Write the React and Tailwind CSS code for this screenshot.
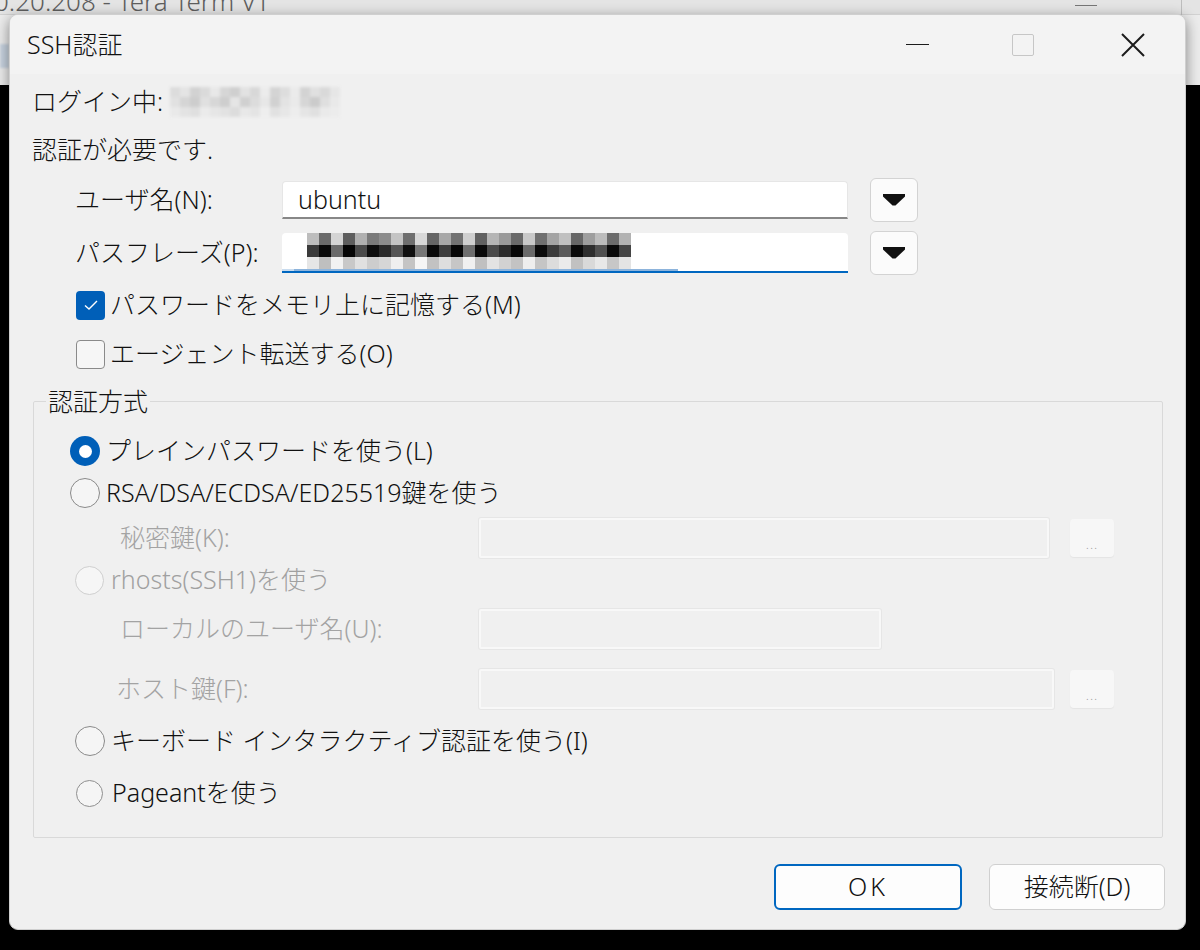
import React from "react";

const FONT = "font-['Noto_Sans','Noto_Sans_CJK_JP',sans-serif]";

// Pixelated mask used over the hidden passphrase
const MID = ["#3a3a3a","#0a0a0a","#6a6a6a","#050505","#4a4a4a","#0d0d0d","#2a2a2a","#555555","#101010","#777777","#0a0a0a","#3d3d3d","#060606","#6e6e6e","#0a0a0a","#4a4a4a","#2c2c2c","#080808","#6a6a6a","#0b0b0b","#3b3b3b","#5a5a5a","#0a0a0a","#2e2e2e","#505050","#0a0a0a","#444444"];
const TOP = ["#bdbdbd","#6b6b6b","#d4d4d4","#5e5e5e","#b0b0b0","#7a7a7a","#8c8c8c","#c4c4c4","#6f6f6f","#d8d8d8","#666666","#a8a8a8","#727272","#cfcfcf","#616161","#b5b5b5","#9a9a9a","#6a6a6a","#c9c9c9","#707070","#a4a4a4","#c0c0c0","#676767","#9e9e9e","#bcbcbc","#6c6c6c","#b2b2b2"];
const BOT = ["#e6e6e6","#bfbfbf","#f2f2f2","#c8c8c8","#e0e0e0","#cdcdcd","#d6d6d6","#efefef","#c4c4c4","#f5f5f5","#c2c2c2","#dedede","#c6c6c6","#f0f0f0","#c0c0c0","#e3e3e3","#d2d2d2","#c3c3c3","#eeeeee","#c5c5c5","#dcdcdc","#ebebeb","#c1c1c1","#d9d9d9","#e8e8e8","#c7c7c7","#e4e4e4"];

function PassMask() {
  return (
    <svg className="absolute left-0 top-0" width="566" height="42" viewBox="0 0 566 42">
      {MID.map((c, i) => (
        <g key={i}>
          <rect x={25 + i * 12} y="0" width="12" height="12" fill={TOP[i]} />
          <rect x={25 + i * 12} y="12" width="12" height="12" fill={c} />
          <rect x={25 + i * 12} y="24" width="12" height="12" fill={BOT[i]} />
        </g>
      ))}
      <rect x="0" y="36" width="12" height="5" fill="#c9dcef" />
      <rect x="12" y="36" width="384" height="5" fill="#8db4dc" />
    </svg>
  );
}

// Blurred host name after "ログイン中:"
const HOST = [
  ["#dcdcdc","#e4e4e4","#d2d2d2","#dadada","#e8e8e8","#d6d6d6","#cfcfcf","#e2e2e2","#d8d8d8","#ececec","#d4d4d4","#dddddd","#ebebeb","#d3d3d3","#e0e0e0","#d9d9d9","#e6e6e6"],
  ["#e1e1e1","#d5d5d5","#cdcdcd","#e0e0e0","#d7d7d7","#cecece","#e5e5e5","#d0d0d0","#dcdcdc","#e7e7e7","#d1d1d1","#e3e3e3","#eaeaea","#d6d6d6","#cbcbcb","#dfdfdf","#e9e9e9"],
  ["#e9e9e9","#e3e3e3","#dfdfdf","#ebebeb","#e6e6e6","#e2e2e2","#dcdcdc","#e8e8e8","#e4e4e4","#eeeeee","#e1e1e1","#e7e7e7","#ededed","#e5e5e5","#e0e0e0","#eaeaea","#ececec"],
];

function HostBlur() {
  return (
    <svg className="blur-[1.5px]" width="171" height="30" viewBox="0 0 171 30">
      {HOST.map((row, r) =>
        row.map((c, i) => <rect key={`${r}-${i}`} x={i * 10} y={r * 10} width="10" height="10" fill={c} />)
      )}
    </svg>
  );
}

function DropButton() {
  return (
    <div className="ml-[22px] flex h-[44px] w-[48px] items-center justify-center rounded-[6px] border border-[#d3d3d3] bg-[#fbfbfb]">
      <svg width="22" height="12" viewBox="0 0 22 12">
        <polygon points="0,0 22,0 22,2.5 12.5,11.5 9.5,11.5 0,2.5" fill="#111" />
      </svg>
    </div>
  );
}

function Check({ on }) {
  return on ? (
    <div className="flex h-[29px] w-[29px] items-center justify-center rounded-[4px] bg-[#005fb8]">
      <svg width="16" height="12" viewBox="0 0 16 12">
        <path d="M2 6.5 L6 10 L14 2" fill="none" stroke="#fff" strokeWidth="1.4" />
      </svg>
    </div>
  ) : (
    <div className="h-[29px] w-[29px] rounded-[4px] border-[1.5px] border-[#8a8a8a] bg-[#f6f6f6]" />
  );
}

function Radio({ kind }) {
  if (kind === "on")
    return (
      <div className="flex h-[30px] w-[30px] items-center justify-center rounded-full bg-[#005fb8]">
        <div className="h-[13px] w-[13px] rounded-full bg-white" />
      </div>
    );
  if (kind === "off-dim")
    return <div className="h-[29px] w-[29px] rounded-full border-[1.5px] border-[#cfcfcf] bg-[#f6f6f6]" />;
  if (kind === "small")
    return <div className="h-[27px] w-[27px] rounded-full border-[1.5px] border-[#8f8f8f] bg-[#f5f5f5]" />;
  return <div className="h-[30px] w-[30px] rounded-full border-[1.5px] border-[#8a8a8a] bg-[#f5f5f5]" />;
}

function DimField({ w }) {
  return <div className={`h-[40px] ${w} rounded-[2px] border-2 border-[#f8f8f8] bg-[#f0f0f0] shadow-[0_0_0_1px_#e6e6e6]`} />;
}

function DotsButton({ gap }) {
  return (
    <div className={`${gap} flex h-[38px] w-[44px] items-end justify-center rounded-[4px] bg-[#f7f7f7] pb-[6px] text-[13px] leading-none tracking-[1px] text-[#9a9a9a] shadow-[0_1px_1px_#e4e4e4]`}>
      ...
    </div>
  );
}

export default function App() {
  return (
    <div className={`relative h-[950px] w-[1200px] overflow-hidden bg-black ${FONT} font-light`}>
      {/* parent terminal window peeking out behind the dialog */}
      <div className="relative h-[85px] w-full bg-[#ececec]">
        <div className="flex h-[15px] items-end overflow-hidden border-b border-[#d2d2d2] bg-[#e4e4e4]">
          <span className="ml-[-6px] whitespace-nowrap text-[26px] leading-[26px] text-[#5e5e5e]">0.20.208 - Tera Term VT</span>
        </div>
        <div className="absolute left-[1075px] top-[5px] h-[1px] w-[22px] bg-[#777]" />
        <div className="absolute left-[1181px] top-0 h-[15px] w-[1px] bg-[#bdbdbd]" />
        <div className="absolute left-0 top-[44px] h-[24px] w-[9px] bg-[#c8d3e0] blur-[1px]" />
      </div>

      {/* SSH authentication dialog */}
      <div className="absolute left-[9px] top-[14px] flex h-[916px] w-[1177px] flex-col overflow-hidden rounded-[9px] border border-[#cfcfcf] bg-[#f0f0f0] text-[25px] text-[#111] shadow-[0_4px_14px_rgba(0,0,0,0.45)]">
        {/* title bar */}
        <div className="flex h-[59px] shrink-0 items-center bg-[#f3f3f3]">
          <div className="ml-[17px] text-[25px] leading-none">SSH認証</div>
          <div className="ml-auto flex items-center">
            <div className="h-[1.5px] w-[23px] bg-[#1b1b1b]" />
            <div className="ml-[83px] h-[22px] w-[22px] rounded-[2px] border-[1.5px] border-[#c6c6c6]" />
            <svg className="ml-[87px] mr-[40px]" width="24" height="24" viewBox="0 0 24 24">
              <path d="M1 1 L23 23 M23 1 L1 23" stroke="#1b1b1b" strokeWidth="2" />
            </svg>
          </div>
        </div>

        {/* header text */}
        <div className="mt-[4px] flex h-[48px] items-center pl-[22px]">
          <span>ログイン中:</span>
          <span className="ml-[7px]"><HostBlur /></span>
        </div>
        <div className="flex h-[48px] items-center pl-[22px]">認証が必要です.</div>

        {/* user name */}
        <div className="flex h-[52px] items-center pl-[65px]">
          <div className="w-[207px]">ユーザ名(N):</div>
          <div className="flex h-[38px] w-[566px] items-center rounded-t-[4px] border border-b-2 border-[#e6e6e6] border-b-[#878787] bg-white pl-[15px]">
            ubuntu
          </div>
          <DropButton />
        </div>

        {/* passphrase */}
        <div className="flex h-[54px] items-center pl-[65px]">
          <div className="w-[207px]">パスフレーズ(P):</div>
          <div className="relative h-[40px] w-[566px] overflow-hidden rounded-t-[4px] border-b-2 border-[#0067c0] bg-white">
            <PassMask />
          </div>
          <DropButton />
        </div>

        {/* options */}
        <div className="flex h-[50px] items-center gap-[5px] pl-[66px]">
          <Check on />
          <span>パスワードをメモリ上に記憶する(M)</span>
        </div>
        <div className="flex h-[48px] items-center gap-[5px] pl-[66px]">
          <Check />
          <span>エージェント転送する(O)</span>
        </div>

        {/* authentication method group */}
        <fieldset className="ml-[23px] mt-[9px] w-[1130px] rounded-[2px] border border-[#d9d9d9] pb-[15px]">
          <legend className="ml-[12px] px-[2px] leading-[28px]">認証方式</legend>

          <div className="mt-[15px] flex h-[42px] items-center gap-[6px] pl-[36px]">
            <Radio kind="on" />
            <span>プレインパスワードを使う(L)</span>
          </div>
          <div className="flex h-[42px] items-center gap-[6px] pl-[36px]">
            <Radio />
            <span>RSA/DSA/ECDSA/ED25519鍵を使う</span>
          </div>
          <div className="flex h-[48px] items-center pl-[86px] text-[#a3a3a3]">
            <div className="w-[359px]">秘密鍵(K):</div>
            <DimField w="w-[570px]" />
            <DotsButton gap="ml-[21px]" />
          </div>
          <div className="flex h-[36px] items-center gap-[7px] pl-[41px] text-[#a0a0a0]">
            <Radio kind="off-dim" />
            <span>rhosts(SSH1)を使う</span>
          </div>
          <div className="flex h-[62px] items-center pl-[86px] text-[#a3a3a3]">
            <div className="w-[359px]">ローカルのユーザ名(U):</div>
            <DimField w="w-[402px]" />
          </div>
          <div className="flex h-[58px] items-center pl-[82px] text-[#a3a3a3]">
            <div className="w-[363px]">ホスト鍵(F):</div>
            <DimField w="w-[575px]" />
            <DotsButton gap="ml-[16px]" />
          </div>
          <div className="flex h-[46px] items-center gap-[6px] pl-[41px]">
            <Radio />
            <span>キーボード インタラクティブ認証を使う(I)</span>
          </div>
          <div className="flex h-[58px] items-center gap-[9px] pl-[42px]">
            <Radio kind="small" />
            <span>Pageantを使う</span>
          </div>
        </fieldset>

        {/* dialog buttons */}
        <div className="mt-[26px] flex justify-end gap-[27px] pr-[20px]">
          <button className="flex h-[46px] w-[188px] items-center justify-center rounded-[6px] border-2 border-[#0067c0] bg-[#fdfdfd] tracking-[3px]">
            OK
          </button>
          <button className="flex h-[46px] w-[176px] items-center justify-center rounded-[6px] border border-[#d0d0d0] bg-[#fdfdfd]">
            接続断(D)
          </button>
        </div>
      </div>
    </div>
  );
}
